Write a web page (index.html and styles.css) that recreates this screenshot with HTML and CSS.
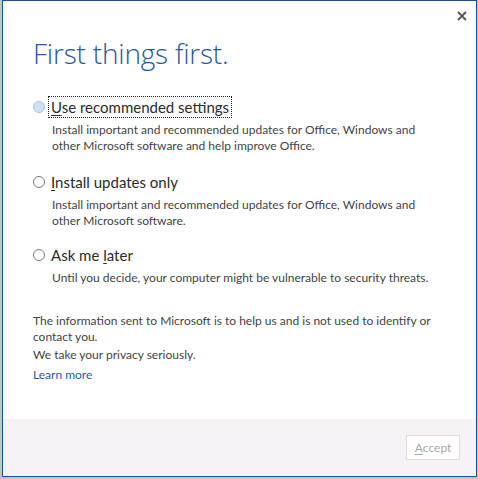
FILE: index.html
```html
<!DOCTYPE html>
<html>
<head>
<meta charset="utf-8">
<link rel="stylesheet" href="styles.css">
</head>
<body>
<div class="window">
  <div class="main">
    <div class="titlebar">
      <svg class="close" width="10" height="10" viewBox="0 0 10 10"><path d="M1 1 L9 9 M9 1 L1 9" stroke="#5a5a5a" stroke-width="2" fill="none"/></svg>
    </div>
    <h1 class="title">First things first.</h1>
    <div class="options">
      <div class="option">
        <div class="row"><span class="radio radio-hot"></span><span class="label focused"><u>U</u>se recommended settings</span></div>
        <p class="desc">Install important and recommended updates for Office, Windows and other Microsoft software and help improve Office.</p>
      </div>
      <div class="option">
        <div class="row"><span class="radio"></span><span class="label"><u>I</u>nstall updates only</span></div>
        <p class="desc">Install important and recommended updates for Office, Windows and other Microsoft software.</p>
      </div>
      <div class="option">
        <div class="row"><span class="radio"></span><span class="label">Ask me <u>l</u>ater</span></div>
        <p class="desc">Until you decide, your computer might be vulnerable to security threats.</p>
      </div>
    </div>
    <div class="privacy">
      <p class="ptext">The information sent to Microsoft is to help us and is not used to identify or contact you.</p>
      <p class="ptext">We take your privacy seriously.</p>
      <a class="learn">Learn more</a>
    </div>
  </div>
  <div class="footer">
    <span class="btn"><u>A</u>ccept</span>
  </div>
</div>
</body>
</html>
```
FILE: styles.css
```css
html, body { margin: 0; padding: 0; }
body {
  background: #c4c4c4;
  width: 478px;
  height: 479px;
  overflow: hidden;
  font-family: "Lato", "Noto Sans", sans-serif;
}
.window {
  margin-left: 2px;
  width: 473px;
  height: 475px;
  border: 1px solid #1e4f91;
  background: #fff;
  display: flex;
  flex-direction: column;
}
.main { flex: 1; display: flex; flex-direction: column; padding-left: 30px; }
.titlebar { height: 28px; display: flex; justify-content: flex-end; padding-right: 9px; }
.close { margin-top: 10px; }
.title {
  margin: 4px 0 0 0;
  font-family: "Open Sans", sans-serif;
  font-weight: 300;
  font-size: 28px;
  line-height: 40px;
  color: #2a579a;
  letter-spacing: -0.2px;
}
.options { margin-top: 23px; display: flex; flex-direction: column; }
.option + .option { margin-top: 17px; }
.option:last-child { margin-top: 15px; }
.row { display: flex; align-items: center; height: 22px; }
.radio {
  border-radius: 50%;
  border: 1px solid #7a7a7a; background: #fff; box-sizing: border-box;
  width: 12px; height: 12px; margin-right: 6px; flex: none;
}
.radio-hot { background: #cfe0f7; border-color: #a9c3e6; }
.label { font-size: 15px; color: #2b2b2b; padding: 0 2px; line-height: 20px; border: 1px solid transparent; margin-left: -3px;}
.label u { text-decoration-thickness: 1px; text-underline-offset: 2px; }
.focused { border: 1px dotted #222; }
.desc { margin: 4px 0 0 19px; font-size: 12px; line-height: 16px; color: #444; width: 385px; }
.privacy { margin-top: 27px; }
.ptext { margin: 0 0 2px 0; font-size: 12px; line-height: 16px; color: #444; width: 400px; }
.learn { display: block; margin-top: 4px; font-size: 12px; line-height: 16px; color: #1e5aa8; }
.footer {
  height: 57px; background: #f6f2f6;
  display: flex; justify-content: flex-end; align-items: flex-start;
  padding-right: 16px;
}
.btn {
  margin-top: 16px;
  width: 54px; height: 25px; box-sizing: border-box;
  border: 1px solid #dcdcdc; background: #fff;
  color: #a8a8a8; font-size: 12px;
  display: flex; align-items: center; justify-content: center;
}
.btn u { text-underline-offset: 2px; }
```
